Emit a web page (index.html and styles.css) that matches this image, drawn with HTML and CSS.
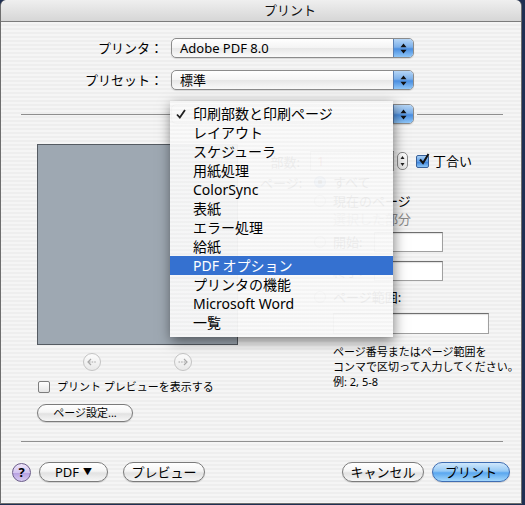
FILE: index.html
```html
<!DOCTYPE html>
<html lang="ja">
<head>
<meta charset="utf-8">
<title>プリント</title>
<link rel="stylesheet" href="styles.css">
</head>
<body>
<div class="window">
  <div class="titlebar">プリント</div>
  <div class="content">
    <div class="form-row">
      <span class="label">プリンタ：</span>
      <div class="popup">
        <span class="popup-text">Adobe PDF 8.0</span>
        <span class="popup-arrows"><svg width="7" height="11" viewBox="0 0 7 11"><path d="M3.5 0.5 L6.5 4.2 H0.5Z M3.5 10.5 L6.5 6.8 H0.5Z" fill="#111"/></svg></span>
      </div>
    </div>
    <div class="form-row">
      <span class="label">プリセット：</span>
      <div class="popup">
        <span class="popup-text">標準</span>
        <span class="popup-arrows"><svg width="7" height="11" viewBox="0 0 7 11"><path d="M3.5 0.5 L6.5 4.2 H0.5Z M3.5 10.5 L6.5 6.8 H0.5Z" fill="#111"/></svg></span>
      </div>
    </div>
    <div class="pane-divider">
      <span class="rule left"></span>
      <div class="popup">
        <span class="popup-text"></span>
        <span class="popup-arrows"><svg width="7" height="11" viewBox="0 0 7 11"><path d="M3.5 0.5 L6.5 4.2 H0.5Z M3.5 10.5 L6.5 6.8 H0.5Z" fill="#111"/></svg></span>
      </div>
      <span class="rule right"></span>
    </div>
    <div class="main">
      <div class="preview-col">
        <div class="preview"></div>
        <div class="nav">
          <span class="round-btn"><svg width="10" height="8" viewBox="0 0 10 8"><path d="M4 1 L1 4 L4 7" stroke="#a8a8a8" stroke-width="1.2" fill="none"/><path d="M2 4 H9.5" stroke="#a8a8a8" stroke-width="1.2" stroke-dasharray="1.6 1"/></svg></span>
          <span class="round-btn"><svg width="10" height="8" viewBox="0 0 10 8"><path d="M6 1 L9 4 L6 7" stroke="#a8a8a8" stroke-width="1.2" fill="none"/><path d="M0.5 4 H8" stroke="#a8a8a8" stroke-width="1.2" stroke-dasharray="1.6 1"/></svg></span>
        </div>
        <div class="check-row">
          <span class="checkbox"></span>
          <span class="check-text">プリント プレビューを表示する</span>
        </div>
        <div class="pill small">ページ設定...</div>
      </div>
      <div class="settings">
        <div class="srow copies">
          <span class="slabel">部数:</span>
          <span class="field copies-field">1</span>
          <span class="stepper"><svg width="5" height="12" viewBox="0 0 5 12"><path d="M2.5 1 L4.5 4 H0.5Z M2.5 11 L4.5 8 H0.5Z" fill="#222"/></svg></span>
          <span class="checkbox checked"><svg width="13" height="13" viewBox="0 0 13 13"><path d="M3 6.5 L6 10 L11.5 1" stroke="#111" stroke-width="2" fill="none"/></svg></span>
          <span class="stext">丁合い</span>
        </div>
        <div class="srow radio-row r1">
          <span class="slabel">ページ:</span>
          <span class="radio on"></span>
          <span class="rtext">すべて</span>
        </div>
        <div class="srow radio-row">
          <span class="slabel"></span>
          <span class="radio"></span>
          <span class="rtext">現在のページ</span>
        </div>
        <div class="srow indent-row">
          <span class="rtext dim">選択した部分</span>
        </div>
        <div class="srow field-row start">
          <span class="slabel"></span>
          <span class="radio"></span>
          <span class="rtext">開始:</span>
          <span class="field range-field"></span>
        </div>
        <div class="srow field-row end">
          <span class="slabel"></span>
          <span class="radio blank"></span>
          <span class="rtext">終了:</span>
          <span class="field range-field"></span>
        </div>
        <div class="srow radio-row range">
          <span class="slabel"></span>
          <span class="radio"></span>
          <span class="rtext">ページ範囲:</span>
        </div>
        <div class="field wide-field"></div>
        <p class="help-text">ページ番号またはページ範囲を<br>コンマで区切って入力してください。<br>例: 2, 5-8</p>
      </div>
    </div>
    <div class="rule bottom-rule"></div>
  </div>
  <div class="footer">
    <span class="help-btn">?</span>
    <span class="pill pdf">PDF <span class="tri">▼</span></span>
    <span class="pill preview-btn">プレビュー</span>
    <span class="spacer"></span>
    <span class="pill cancel">キャンセル</span>
    <span class="pill default">プリント</span>
  </div>
  <ul class="menu">
    <li class="item"><span class="check"><svg width="10" height="10" viewBox="0 0 10 10"><path d="M1 5.5 L3.8 8.5 L9 1" stroke="#222" stroke-width="1.8" fill="none"/></svg></span>印刷部数と印刷ページ</li>
    <li class="item"><span class="check"></span>レイアウト</li>
    <li class="item"><span class="check"></span>スケジューラ</li>
    <li class="item"><span class="check"></span>用紙処理</li>
    <li class="item"><span class="check"></span>ColorSync</li>
    <li class="item"><span class="check"></span>表紙</li>
    <li class="item"><span class="check"></span>エラー処理</li>
    <li class="item"><span class="check"></span>給紙</li>
    <li class="item selected"><span class="check"></span>PDF オプション</li>
    <li class="item"><span class="check"></span>プリンタの機能</li>
    <li class="item"><span class="check"></span>Microsoft Word</li>
    <li class="item"><span class="check"></span>一覧</li>
  </ul>
</div>
</body>
</html>
```

FILE: styles.css
```css
* { box-sizing: border-box; }
html, body { margin: 0; padding: 0; }
body {
  width: 525px;
  height: 505px;
  overflow: hidden;
  background: #1f2f52;
  font-family: "Noto Sans", "Noto Sans CJK JP", sans-serif;
  font-size: 13px;
  color: #000;
}
.window {
  position: relative;
  width: 522px;
  height: 504px;
  border: 1px solid #6e6e6e;
  border-top: 0;
  border-radius: 6px 6px 0 0;
  overflow: hidden;
  display: flex;
  flex-direction: column;
  background: repeating-linear-gradient(to bottom, #eeeeee 0, #eeeeee 2px, #f5f5f5 2px, #f5f5f5 4px);
}
.titlebar {
  flex: none;
  height: 22px;
  border-bottom: 1px solid #7c7c7c;
  border-radius: 6px 6px 0 0;
  background: linear-gradient(#efefef, #d6d6d6);
  display: flex;
  align-items: center;
  justify-content: center;
  padding-left: 58px;
  font-size: 13px;
  line-height: 1;
  color: #111;
}
.content { padding: 16px 18px 0 20px; }
.form-row {
  display: grid;
  grid-template-columns: 142px 243px;
  column-gap: 8px;
  align-items: center;
  height: 20px;
}
.form-row + .form-row { margin-top: 12px; }
.label {
  text-align: right;
  line-height: 20px;
  white-space: nowrap;
}
.popup {
  display: flex;
  height: 20px;
  border: 1px solid #8b8b8b;
  border-radius: 5px;
  overflow: hidden;
  background: linear-gradient(#ffffff 0%, #f4f4f4 48%, #e7e7e7 52%, #fafafa 100%);
  box-shadow: 0 1px 1px rgba(0,0,0,0.12);
}
.popup-text {
  flex: 1;
  padding-left: 8px;
  line-height: 18px;
  white-space: nowrap;
}
.popup-arrows {
  flex: none;
  width: 20px;
  border-left: 1px solid #5b80b2;
  background: linear-gradient(#b5d5f6 0%, #7cb0ea 45%, #4a8ee0 55%, #8fc6f8 100%);
  display: flex;
  align-items: center;
  justify-content: center;
}
.pane-divider {
  display: flex;
  align-items: center;
  height: 20px;
  margin-top: 14px;
}
.pane-divider .popup { flex: none; width: 243px; }
.rule { height: 1px; background: #8f8f8f; }
.pane-divider .rule.left { flex: none; width: 150px; }
.pane-divider .rule.right { flex: 1; margin-left: 3px; }

.main {
  display: flex;
  margin-top: 20px;
  padding-left: 16px;
}
.preview-col { width: 201px; flex: none; }
.preview {
  height: 201px;
  background: #9ea8b2;
  border: 1px solid #555b62;
}
.nav {
  display: flex;
  gap: 73px;
  margin-top: 8px;
  padding-left: 46px;
}
.round-btn {
  width: 18px;
  height: 18px;
  border-radius: 50%;
  border: 1px solid #c4c4c4;
  background: linear-gradient(#fcfcfc, #e9e9e9);
  display: flex;
  align-items: center;
  justify-content: center;
}
.check-row {
  display: flex;
  align-items: center;
  margin-top: 9px;
  padding-left: 1px;
  height: 13px;
}
.checkbox {
  width: 12px;
  height: 12px;
  border: 1px solid #7d7d7d;
  border-radius: 2px;
  background: linear-gradient(#ffffff, #e6e6e6);
  flex: none;
}
.check-text {
  margin-left: 7px;
  font-size: 11px;
  line-height: 13px;
  white-space: nowrap;
}
.pill {
  display: flex;
  align-items: center;
  justify-content: center;
  height: 20px;
  border: 1px solid #7b7b7b;
  border-radius: 10px;
  background: linear-gradient(#ffffff 0%, #f5f5f5 45%, #e2e2e2 55%, #f6f6f6 100%);
  box-shadow: 0 1px 1px rgba(0,0,0,0.15);
  line-height: 18px;
  white-space: nowrap;
}
.pill.small {
  width: 96px;
  height: 18px;
  margin-top: 11px;
  font-size: 11px;
  line-height: 16px;
}

.settings {
  margin-left: 22px;
  padding-top: 7px;
  flex: 1;
}
.srow {
  display: flex;
  align-items: center;
  white-space: nowrap;
}
.slabel {
  width: 40px;
  margin-right: 10px;
  text-align: right;
  flex: none;
}
.field {
  display: block;
  background: #ffffff;
  border: 1px solid #a0a0a0;
  border-top-color: #6f6f6f;
  box-shadow: inset 0 1px 1px rgba(0,0,0,0.12);
}
.copies { height: 20px; }
.copies-field {
  width: 84px;
  height: 20px;
  padding-left: 6px;
  line-height: 18px;
  color: #c0392b;
}
.stepper {
  width: 11px;
  height: 18px;
  margin-left: 3px;
  border: 1px solid #8a8a8a;
  border-radius: 5px;
  background: linear-gradient(#ffffff, #e4e4e4);
  display: flex;
  align-items: center;
  justify-content: center;
}
.checkbox.checked {
  width: 13px;
  height: 13px;
  margin-left: 8px;
  border-color: #37609a;
  background: linear-gradient(#a9d0f5 0%, #5d9ce6 50%, #3b83dc 55%, #8cc5f6 100%);
  position: relative;
  overflow: visible;
}
.checkbox.checked svg { position: absolute; left: 0; top: -3px; }
.stext { margin-left: 4px; line-height: 20px; }
.radio-row { height: 16px; margin-top: 3px; }
.radio {
  width: 12px;
  height: 12px;
  margin-left: 4px;
  border: 1px solid #9a9a9a;
  border-radius: 50%;
  background: linear-gradient(#ffffff, #e4e4e4);
  flex: none;
}
.radio.on {
  border-color: #3a62a0;
  background: radial-gradient(circle at 50% 50%, #1a1a1a 0 2px, transparent 2.5px), linear-gradient(#a9d0f5, #4a8ee0);
}
.radio.blank { visibility: hidden; }
.rtext { margin-left: 7px; line-height: 16px; }
.rtext.dim { color: #8a8a8a; }
.indent-row { height: 16px; margin-top: 2px; padding-left: 66px; }
.field-row { height: 20px; }
.field-row .rtext { width: 41px; flex: none; }
.field-row.start { margin-top: 5px; }
.field-row.end { margin-top: 9px; }
.range-field { width: 69px; height: 20px; }
.radio-row.range { margin-top: 8px; }
.wide-field {
  margin-left: 73px;
  margin-top: 8px;
  width: 156px;
  height: 21px;
}
.help-text {
  margin: 10px 0 0 73px;
  font-size: 11px;
  line-height: 15px;
  white-space: nowrap;
}
.bottom-rule { margin-top: 19px; }

.footer {
  display: flex;
  align-items: center;
  padding: 20px 11px 0 11px;
}
.help-btn {
  width: 19px;
  height: 19px;
  border-radius: 50%;
  border: 1px solid #6b5d8a;
  background: linear-gradient(#efe6fb 0%, #d4c4ef 50%, #b9a2e2 55%, #d8cbf2 100%);
  display: flex;
  align-items: center;
  justify-content: center;
  font-weight: bold;
  font-size: 13px;
  line-height: 1;
  flex: none;
}
.pdf { width: 69px; margin-left: 8px; }
.tri { font-size: 9px; margin-left: 4px; }
.preview-btn { width: 82px; margin-left: 15px; }
.spacer { flex: 1; }
.cancel { width: 82px; }
.default {
  width: 78px;
  margin-left: 8px;
  border-color: #3f6db2;
  background: linear-gradient(#cfe7fc 0%, #95c9f5 45%, #5aa7ef 55%, #a3d7fc 100%);
}

.menu {
  position: absolute;
  left: 169px;
  top: 101px;
  width: 223px;
  height: 236px;
  margin: 0;
  padding: 3px 0 0 0;
  list-style: none;
  background: repeating-linear-gradient(to bottom, rgba(244,244,244,0.95) 0, rgba(244,244,244,0.95) 2px, rgba(250,250,250,0.95) 2px, rgba(250,250,250,0.95) 4px);
  box-shadow: 1px 4px 12px rgba(0,0,0,0.5);
}
.item {
  height: 19px;
  line-height: 19px;
  font-size: 14px;
  padding-left: 6px;
  white-space: nowrap;
  display: flex;
  align-items: center;
}
.check {
  width: 17px;
  flex: none;
  display: flex;
  align-items: center;
}
.item.selected {
  background: #3571d0;
  color: #fff;
}
```
